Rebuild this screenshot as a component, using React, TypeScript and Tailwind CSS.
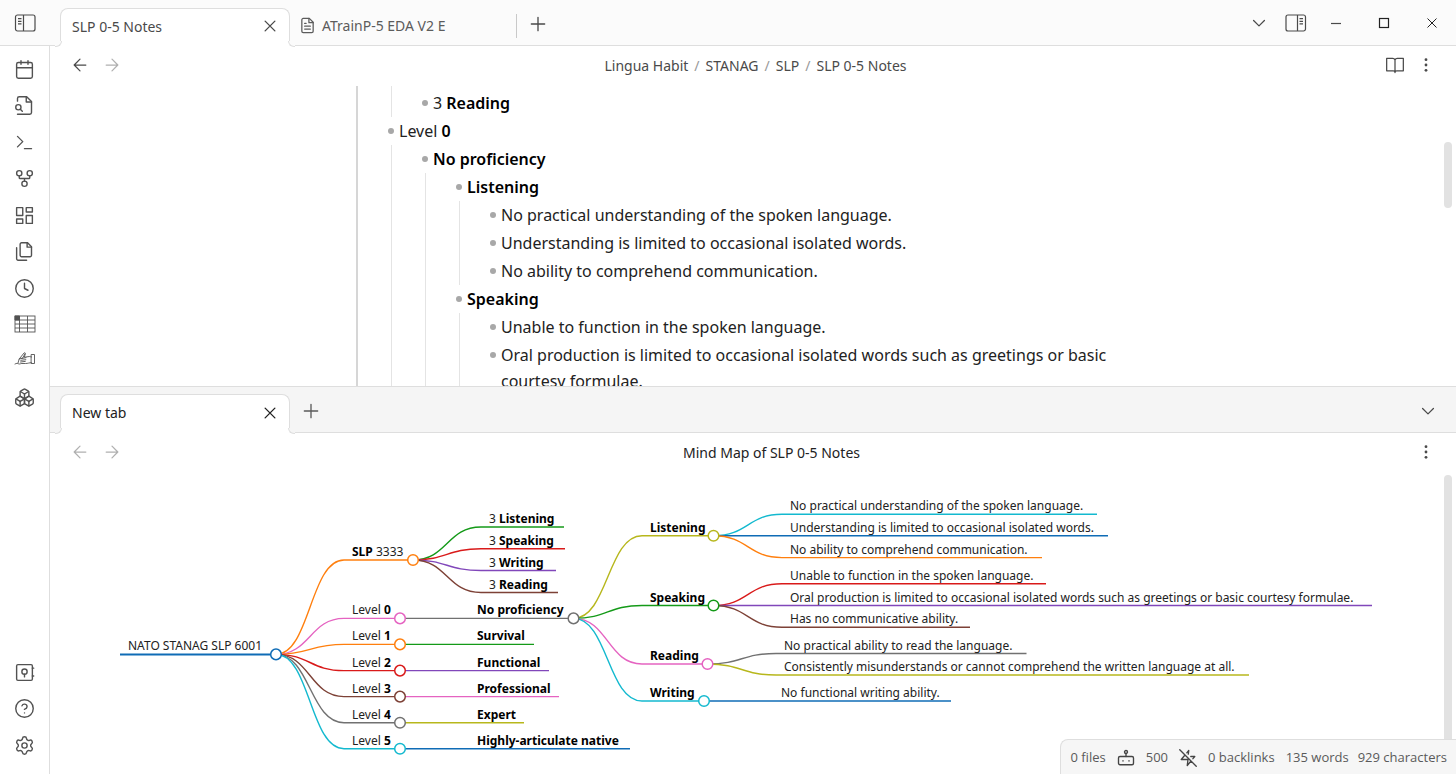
import React from "react";
import { Boxes, Settings } from "lucide-react";

type IconProps = { size?: number; width?: number; className?: string; children: React.ReactNode };

function Icon({ size = 21, width = 1.6, className = "", children }: IconProps) {
  return (
    <svg
      width={size}
      height={size}
      viewBox="0 0 24 24"
      fill="none"
      stroke="currentColor"
      strokeWidth={width}
      strokeLinecap="round"
      strokeLinejoin="round"
      className={`shrink-0 ${className}`}
      aria-hidden="true"
    >
      {children}
    </svg>
  );
}

const Close = () => (
  <Icon size={18} width={1.8}>
    <path d="M18.500 5.500l-13 13M5.500 5.500l13 13" />
  </Icon>
);
const Plus = () => (
  <Icon size={20} width={1.6}>
    <path d="M12 4v16M4 12h16" />
  </Icon>
);
const ArrowLeft = () => (
  <Icon size={20} width={1.5}>
    <path d="M19 12H5M12 19l-7-7 7-7" />
  </Icon>
);
const ArrowRight = () => (
  <Icon size={20} width={1.5}>
    <path d="M5 12h14M12 5l7 7-7 7" />
  </Icon>
);
const ChevronDown = () => (
  <Icon size={20} width={1.5}>
    <path d="M5.500 9l6.500 6.500 6.500-6.500" />
  </Icon>
);
const Dots = () => (
  <svg width="20" height="20" viewBox="0 0 20 20" fill="currentColor" aria-hidden="true">
    <circle cx="10" cy="4.700" r="1.400" />
    <circle cx="10" cy="10" r="1.400" />
    <circle cx="10" cy="15.300" r="1.400" />
  </svg>
);
const Panel = ({ flip = false }: { flip?: boolean }) => (
  <svg width="22" height="18" viewBox="0 0 22 18" fill="none" stroke="currentColor" strokeWidth="1.200" className={flip ? "-scale-x-100" : ""} aria-hidden="true">
    <rect x="1.500" y="1" width="19.500" height="16" rx="2" />
    <path d="M9.500 1v16M4 4.700h3.500M4 7.300h3.500M4 9.900h3.500" />
  </svg>
);

const ribbonTop: { label: string; icon: React.ReactNode }[] = [
  {
    label: "Daily note",
    icon: (
      <Icon>
        <rect x="3" y="4" width="18" height="18" rx="2" />
        <path d="M16 2v4M8 2v4M3 10h18" />
      </Icon>
    ),
  },
  {
    label: "Quick switcher",
    icon: (
      <Icon>
        <path d="M4 22h14a2 2 0 0 0 2-2V7.500L14.500 2H6a2 2 0 0 0-2 2v3" />
        <path d="M14 2v6h6" />
        <circle cx="5" cy="14" r="3" />
        <path d="M9.500 18.500l-2.300-2.300" />
      </Icon>
    ),
  },
  {
    label: "Command palette",
    icon: (
      <Icon>
        <path d="M4 17l6-6-6-6M12 19h8" />
      </Icon>
    ),
  },
  {
    label: "Graph view",
    icon: (
      <Icon>
        <circle cx="12" cy="18" r="3" />
        <circle cx="6" cy="6" r="3" />
        <circle cx="18" cy="6" r="3" />
        <path d="M18 9v2c0 .6-.4 1-1 1H7c-.6 0-1-.4-1-1V9M12 12v3" />
      </Icon>
    ),
  },
  {
    label: "Canvas",
    icon: (
      <Icon>
        <rect x="3" y="3" width="7" height="9" />
        <rect x="14" y="3" width="7" height="5" />
        <rect x="14" y="12" width="7" height="9" />
        <rect x="3" y="16" width="7" height="5" />
      </Icon>
    ),
  },
  {
    label: "Templates",
    icon: (
      <Icon>
        <path d="M15.500 2H8.600c-.4 0-.8.2-1.100.5-.3.3-.5.7-.5 1.100v12.800c0 .4.2.8.5 1.100.3.3.7.5 1.100.5h9.800c.4 0 .8-.2 1.100-.5.3-.3.5-.7.5-1.100V6.500L15.500 2z" />
        <path d="M3 7.600v12.800c0 .4.2.8.5 1.100.3.3.7.5 1.100.5h9.800" />
        <path d="M15 2v5h5" />
      </Icon>
    ),
  },
  {
    label: "Recent files",
    icon: (
      <Icon>
        <circle cx="12" cy="12" r="10" />
        <path d="M12 6v6l4 2" />
      </Icon>
    ),
  },
  {
    label: "Table editor",
    icon: (
      <svg width="22" height="20" viewBox="0 0 22 20" fill="none" stroke="currentColor" strokeWidth="0.900" aria-hidden="true">
        <rect x="1" y="1" width="20" height="16" />
        <path d="M1 5h20M1 9h20M1 13h20M5.500 1v16M13.500 1v16" />
        <path d="M1 1h4.500v4H1z" fill="currentColor" />
      </svg>
    ),
  },
  {
    label: "Drawing",
    icon: (
      <svg width="22" height="24" viewBox="0 0 22 24" fill="none" stroke="currentColor" strokeWidth="0.900" strokeLinejoin="round" strokeLinecap="round" aria-hidden="true">
        <path d="M1 15c1.500-.8 2.500-.8 3.500-.2 1 .4 1.500.2 2 0M4 14l1.200-4 4.800-6c.6-.6 1.500-.2 1.200.5L8.500 9.200" />
        <path d="M5.200 10L8 9.200M11.300 5l-1 3.200 5-.7c.8 0 1.400.4 2.200.5M7.500 9.500l4.500-.8M6.800 11.300l5-.6M6.500 13l4.800-.6M7.500 14.500h4c2.500 0 3.500-.8 6-.8" />
        <path d="M17.500 5.500h3v9h-3z" />
      </svg>
    ),
  },
  { label: "3D graph", icon: <Boxes size={21} strokeWidth={1.6} /> },
];

const ribbonBottom: { label: string; icon: React.ReactNode }[] = [
  {
    label: "Open vault",
    icon: (
      <Icon>
        <rect x="3" y="3" width="18" height="18" rx="1.500" />
        <circle cx="12" cy="11" r="3" />
        <path d="M12 14v3M21 7h1.500M21 16h1.500" />
      </Icon>
    ),
  },
  {
    label: "Help",
    icon: (
      <Icon>
        <circle cx="12" cy="12" r="10" />
        <path d="M9.090 9a3 3 0 0 1 5.830 1c0 2-3 3-3 3M12 17h.01" />
      </Icon>
    ),
  },
  { label: "Settings", icon: <Settings size={21} strokeWidth={1.6} /> },
];

function RibbonButton({ label, icon }: { label: string; icon: React.ReactNode }) {
  return (
    <button type="button" aria-label={label} className="flex items-center justify-center">
      {icon}
    </button>
  );
}

/* The concave foot on either side of an active tab. */
function TabFeet({ tint }: { tint: "light" | "gray" }) {
  const fill = tint === "light" ? "bg-[#fbfbfb]" : "bg-[#f5f5f5]";
  return (
    <>
      <span className="absolute -bottom-px -left-1.5 size-1.5 bg-white">
        <span className={`block h-full w-[7px] rounded-br-md border-r border-b border-[#dedede] ${fill}`} />
      </span>
      <span className="absolute -right-1.5 -bottom-px flex size-1.5 justify-end bg-white">
        <span className={`block h-full w-[7px] shrink-0 rounded-bl-md border-b border-l border-[#dedede] ${fill}`} />
      </span>
    </>
  );
}

function ActiveTab({ title, tint }: { title: string; tint: "light" | "gray" }) {
  return (
    <div className="relative -mb-px flex w-[230px] items-center justify-between rounded-t-lg border border-b-0 border-[#dedede] bg-white pr-[9px] pb-[3px] pl-[11px]">
      <span className="text-[14px]">{title}</span>
      <button type="button" aria-label={`Close ${title}`} className="flex size-5 items-center justify-center">
        <Close />
      </button>
      <TabFeet tint={tint} />
    </div>
  );
}

type Item = { text?: string; bold?: string; children?: Item[] };

const outline: Item[] = [
  { children: [{ text: "3 ", bold: "Reading" }] },
  {
    text: "Level ",
    bold: "0",
    children: [
      {
        bold: "No proficiency",
        children: [
          {
            bold: "Listening",
            children: [
              { text: "No practical understanding of the spoken language." },
              { text: "Understanding is limited to occasional isolated words." },
              { text: "No ability to comprehend communication." },
            ],
          },
          {
            bold: "Speaking",
            children: [
              { text: "Unable to function in the spoken language." },
              {
                text: "Oral production is limited to occasional isolated words such as greetings or basic courtesy formulae.",
              },
            ],
          },
        ],
      },
    ],
  },
];

function OutlineItem({ item }: { item: Item }) {
  const hasLabel = Boolean(item.text || item.bold);
  return (
    <li>
      {hasLabel && (
        <div className="flex py-px">
          <span className="mt-[10px] mr-[5px] size-[6px] shrink-0 rounded-full bg-[#a8a8a8]" />
          <span>
            {item.text}
            {item.bold && <strong className="font-semibold text-black">{item.bold}</strong>}
          </span>
        </div>
      )}
      {item.children && (
        <ul className={`ml-[3px] border-l border-[#e4e4e4] pl-[30px] ${hasLabel ? "" : "pt-[3px]"}`}>
          {item.children.map((child, i) => (
            <OutlineItem key={i} item={child} />
          ))}
        </ul>
      )}
    </li>
  );
}

const C = {
  blue: "#0f6cb6",
  orange: "#ff7f0e",
  green: "#149a18",
  red: "#d91a1a",
  purple: "#8147ba",
  brown: "#7d4136",
  pink: "#e563c1",
  gray: "#717171",
  olive: "#b7b71c",
  cyan: "#13b9cf",
};

type MapNode = {
  x: number;
  y: number;
  end: number;
  color: string;
  text?: string;
  bold?: string;
  boldFirst?: boolean;
  weight?: number;
  children?: MapNode[];
};

const level = (n: number, y: number, color: string, child: MapNode): MapNode => ({
  x: 352, y, end: 400, color, text: "Level ", bold: String(n), children: [child],
});

const mindMap: MapNode = {
  x: 128, y: 654.4, end: 276, color: C.blue, text: "NATO STANAG SLP 6001", weight: 2,
  children: [
    {
      x: 352, y: 560, end: 413, color: C.orange, bold: "SLP", text: " 3333", boldFirst: true,
      children: [
        { x: 489, y: 527, end: 564, color: C.green, text: "3 ", bold: "Listening" },
        { x: 489, y: 548.8, end: 565, color: C.red, text: "3 ", bold: "Speaking" },
        { x: 489, y: 570.5, end: 556, color: C.purple, text: "3 ", bold: "Writing" },
        { x: 489, y: 592.5, end: 558, color: C.brown, text: "3 ", bold: "Reading" },
      ],
    },
    level(0, 618.4, C.pink, {
      x: 477, y: 618.4, end: 573.5, color: C.gray, bold: "No proficiency",
      children: [
        {
          x: 650, y: 535.8, end: 713.5, color: C.olive, bold: "Listening",
          children: [
            { x: 790, y: 514.3, end: 1097, color: C.cyan, text: "No practical understanding of the spoken language." },
            { x: 790, y: 535.8, end: 1108, color: C.blue, text: "Understanding is limited to occasional isolated words." },
            { x: 790, y: 557.6, end: 1042, color: C.orange, text: "No ability to comprehend communication." },
          ],
        },
        {
          x: 650, y: 605.5, end: 713.5, color: C.green, bold: "Speaking",
          children: [
            { x: 790, y: 583.7, end: 1046, color: C.red, text: "Unable to function in the spoken language." },
            { x: 790, y: 605.5, end: 1372, color: C.purple, text: "Oral production is limited to occasional isolated words such as greetings or basic courtesy formulae." },
            { x: 790, y: 627.2, end: 970, color: C.brown, text: "Has no communicative ability." },
          ],
        },
        {
          x: 650, y: 664, end: 707.5, color: C.pink, bold: "Reading",
          children: [
            { x: 784, y: 653.5, end: 1026.5, color: C.gray, text: "No practical ability to read the language." },
            { x: 784, y: 675, end: 1249, color: C.olive, text: "Consistently misunderstands or cannot comprehend the written language at all.", weight: 1.7 },
          ],
        },
        {
          x: 650, y: 701, end: 704, color: C.cyan, bold: "Writing",
          children: [{ x: 781, y: 701, end: 951, color: C.blue, text: "No functional writing ability.", weight: 1.7 }],
        },
      ],
    }),
    level(1, 644.4, C.orange, { x: 477, y: 644.4, end: 534, color: C.green, bold: "Survival" }),
    level(2, 670.6, C.red, { x: 477, y: 670.6, end: 549, color: C.purple, bold: "Functional" }),
    level(3, 696.6, C.brown, { x: 477, y: 696.6, end: 559, color: C.pink, bold: "Professional" }),
    level(4, 722.7, C.gray, { x: 477, y: 722.7, end: 524, color: C.olive, bold: "Expert" }),
    level(5, 748.7, C.cyan, { x: 477, y: 748.7, end: 630, color: C.blue, bold: "Highly-articulate native" }),
  ],
};

function Branch({ node }: { node: MapNode }) {
  const kids = node.children ?? [];
  return (
    <g>
      {kids.map((kid, i) => {
        const to = kid.x - 8;
        const mid = (node.end + to) / 2;
        return (
          <path
            key={i}
            d={`M${node.end} ${node.y}C${mid} ${node.y} ${mid} ${kid.y} ${to} ${kid.y}`}
            fill="none"
            stroke={kid.color}
            strokeWidth={1.4}
          />
        );
      })}
      {kids.map((kid, i) => (
        <Branch key={i} node={kid} />
      ))}
      <path d={`M${node.x - 8} ${node.y}H${node.end}`} stroke={node.color} strokeWidth={node.weight ?? 1.4} />
      {kids.length > 0 && <circle cx={node.end} cy={node.y} r="5.300" fill="#fff" stroke={node.color} strokeWidth="1.500" />}
      <text x={node.x} y={Math.round(node.y) - 4} fill="#222">
        {node.boldFirst ? (
          <>
            <tspan className="font-bold" fill="#000">{node.bold}</tspan>
            {node.text}
          </>
        ) : (
          <>
            {node.text}
            {node.bold && <tspan className="font-bold" fill="#000">{node.bold}</tspan>}
          </>
        )}
      </text>
    </g>
  );
}

const crumbs = ["Lingua Habit", "STANAG", "SLP"];

export default function App() {
  return (
    <div className="flex h-screen min-h-[640px] flex-col overflow-hidden bg-white font-['Noto_Sans','Open_Sans',sans-serif] text-[#222]">
      <header className="flex h-[46px] shrink-0 border-b border-[#dedede] bg-[#fbfbfb] text-[#4a4a4a]">
        <button type="button" aria-label="Collapse left sidebar" className="mr-2.5 flex w-[50px] shrink-0 items-center justify-center">
          <Panel />
        </button>
        <div className="flex pt-2">
          <ActiveTab title="SLP 0-5 Notes" tint="light" />
        </div>
        <div className="flex w-[227px] items-center pt-1.5">
          <button type="button" className="flex w-full items-center gap-1.5 border-r border-[#c9c9c9] pl-[9px] text-[14px] leading-6 text-[#5c5c5c]">
            <Icon size={17} width={1.8}>
              <path d="M14.500 2H6a2 2 0 0 0-2 2v16a2 2 0 0 0 2 2h12a2 2 0 0 0 2-2V7.500L14.500 2z" />
              <path d="M14 2v6h6M16 13H8M16 17H8M10 9H8" />
            </Icon>
            ATrainP-5 EDA V2 E
          </button>
        </div>
        <button type="button" aria-label="New tab" className="flex w-[42px] items-center justify-center pt-0.5">
          <Plus />
        </button>
        <div className="ml-auto flex">
          <button type="button" aria-label="Tab list" className="flex w-[42px] items-center justify-center">
            <ChevronDown />
          </button>
          <button type="button" aria-label="Expand right sidebar" className="flex w-8 items-center justify-center">
            <Panel flip />
          </button>
          <button type="button" aria-label="Minimize" className="flex w-12 items-center justify-center">
            <svg width="12" height="12" viewBox="0 0 12 12" stroke="currentColor" strokeWidth="1.200"><path d="M1 6.500h10" /></svg>
          </button>
          <button type="button" aria-label="Maximize" className="flex w-12 items-center justify-center">
            <svg width="12" height="12" viewBox="0 0 12 12" fill="none" stroke="#222" strokeWidth="1.200"><rect x="1.500" y="1.500" width="9" height="9" /></svg>
          </button>
          <button type="button" aria-label="Close window" className="flex w-12 items-center justify-center">
            <svg width="12" height="12" viewBox="0 0 12 12" stroke="#222" strokeWidth="1"><path d="M1.500 1.500l9 9M10.500 1.500l-9 9" /></svg>
          </button>
        </div>
      </header>

      <div className="flex min-h-0 flex-1">
        <nav aria-label="Ribbon" className="flex w-[50px] shrink-0 flex-col justify-between border-r border-[#dedede] pt-[5px] pb-2.5 text-[#525252]">
          <div className="grid h-[365px] grid-rows-10">
            {ribbonTop.map((b) => (
              <RibbonButton key={b.label} {...b} />
            ))}
          </div>
          <div className="grid h-[110px] grid-rows-3">
            {ribbonBottom.map((b) => (
              <RibbonButton key={b.label} {...b} />
            ))}
          </div>
        </nav>

        <div className="flex min-w-0 flex-1 flex-col">
          <section className="flex min-h-0 shrink grow-[340] basis-0 flex-col">
            <div className="flex h-10 shrink-0 items-center px-5 pb-0.5 text-[#4a4a4a]">
              <div className="flex w-20 gap-3">
                <button type="button" aria-label="Back"><ArrowLeft /></button>
                <button type="button" aria-label="Forward" className="text-[#b0b0b0]"><ArrowRight /></button>
              </div>
              <div className="flex flex-1 items-center justify-center gap-1.5 pr-6 text-[14px]">
                {crumbs.map((c) => (
                  <React.Fragment key={c}>
                    <a href="#">{c}</a>
                    <span className="text-[#999]">/</span>
                  </React.Fragment>
                ))}
                <span>SLP 0-5 Notes</span>
              </div>
              <div className="flex w-[51px] justify-between">
                <button type="button" aria-label="Reading view">
                  <Icon size={20} width={1.5}>
                    <path d="M2 4h7a3 3 0 0 1 3 2 3 3 0 0 1 3-2h7v15h-8a2 2 0 0 0-2 2 2 2 0 0 0-2-2H2zM12 6v15" />
                  </Icon>
                </button>
                <button type="button" aria-label="More options"><Dots /></button>
              </div>
            </div>
            <div className="flex min-h-0 flex-1 overflow-hidden">
              <div className="ml-3 min-w-0 flex-1">
                <div className="mx-auto max-w-[794px] border-l-2 border-[#d6d6d6] pl-[30px] text-[16px] leading-[26px]">
                  <ul>
                    {outline.map((item, i) => (
                      <OutlineItem key={i} item={item} />
                    ))}
                  </ul>
                </div>
              </div>
              <div className="w-3 shrink-0 pt-14">
                <div className="h-[66px] w-2 rounded-full bg-[#e2e2e2]" />
              </div>
            </div>
          </section>

          <section className="relative flex min-h-0 shrink grow-[388] basis-0 flex-col">
            <div className="flex h-[47px] shrink-0 border-y border-[#dedede] bg-[#f5f5f5] pl-2.5">
              <div className="flex pt-[7px] text-[#222]">
                <ActiveTab title="New tab" tint="gray" />
              </div>
              <button type="button" aria-label="New tab" className="flex w-[42px] items-center justify-center pt-0.5 text-[#5a5a5a]">
                <Plus />
              </button>
              <button type="button" aria-label="Tab list" className="mr-[18px] ml-auto flex items-center pt-0.5 text-[#4a4a4a]">
                <ChevronDown />
              </button>
            </div>
            <div className="flex h-10 shrink-0 items-center px-5 pb-0.5">
              <div className="flex w-20 gap-3 text-[#b0b0b0]">
                <button type="button" aria-label="Back"><ArrowLeft /></button>
                <button type="button" aria-label="Forward"><ArrowRight /></button>
              </div>
              <h1 className="flex-1 pl-2 text-center text-[14px]">Mind Map of SLP 0-5 Notes</h1>
              <div className="flex w-[51px] justify-end text-[#4a4a4a]">
                <button type="button" aria-label="More options"><Dots /></button>
              </div>
            </div>
            <div className="flex min-h-0 flex-1">
              <svg className="h-full min-w-0 flex-1 text-[12px]" role="img" aria-label="Mind map">
                <g transform="translate(-50 -473)">
                  <Branch node={mindMap} />
                </g>
              </svg>
              <div className="w-3 shrink-0 pt-0.5">
                <div className="h-full w-2 rounded-t-full bg-[#e2e2e2]" />
              </div>
            </div>
            <footer className="absolute right-0 bottom-0 flex h-[35px] items-center rounded-tl-lg border-t border-l border-[#dedede] bg-[#f6f6f6] pt-0.5 pr-[9px] pl-[9px] font-['Open_Sans','Noto_Sans',sans-serif] text-[13px] text-[#5a5a5a]">
              <span className="mr-[11px]">0 files</span>
              <Icon size={18} width={1.8} className="mr-[11px] text-[#444]">
                <rect x="2" y="10" width="20" height="11" rx="2" />
                <circle cx="12" cy="4" r="2" />
                <path d="M12 6v4M8 15.500v.5M16 15.500v.5" />
              </Icon>
              <span className="mr-[11px]">500</span>
              <Icon size={18} width={1.8} className="mr-[11px] text-[#444]">
                <path d="M12.400 6.800L13 2l-2.600 3.100M18.600 12.900L21 10h-5.300M8 8l-5 6h9l-1 8 5-6M1 1l22 22" />
              </Icon>
              <span className="mr-[11px]">0 backlinks</span>
              <span className="mr-[9px]">135 words</span>
              <span>929 characters</span>
            </footer>
          </section>
        </div>
      </div>
    </div>
  );
}
